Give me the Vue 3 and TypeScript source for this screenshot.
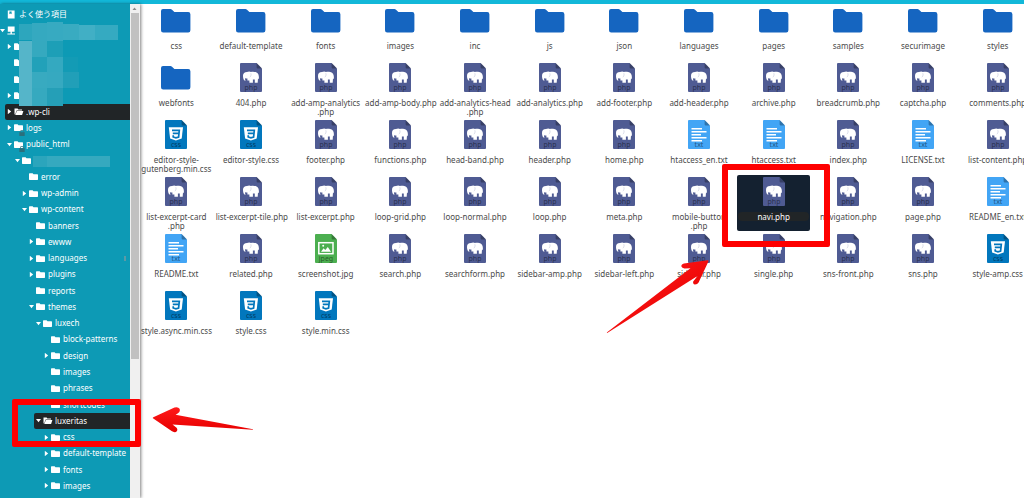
<script setup lang="ts">
interface TreeNode {
  name: string
  level: number
  state?: 'open' | 'closed'
  icon?: 'book' | 'server' | 'folder'
  active?: boolean
  locked?: boolean
  masked?: boolean
}

type FileKind = 'folder' | 'php' | 'css' | 'txt' | 'jpeg'

interface FileEntry {
  name: string
  kind: FileKind
  selected: boolean
}

const tree: TreeNode[] = [
  { name: 'よく使う項目', level: 0, icon: 'book' },
  { name: '', level: 0, icon: 'server', state: 'open', masked: true },
  { name: '', level: 1, state: 'closed', masked: true },
  { name: '', level: 1, masked: true },
  { name: '', level: 1, masked: true },
  { name: '', level: 1, state: 'closed', masked: true },
  { name: '.wp-cli', level: 1, state: 'closed', active: true },
  { name: 'logs', level: 1, state: 'closed', locked: true },
  { name: 'public_html', level: 1, state: 'open', locked: true },
  { name: '', level: 2, state: 'open', masked: true },
  { name: 'error', level: 3 },
  { name: 'wp-admin', level: 3, state: 'closed' },
  { name: 'wp-content', level: 3, state: 'open' },
  { name: 'banners', level: 4 },
  { name: 'ewww', level: 4, state: 'closed' },
  { name: 'languages', level: 4, state: 'closed' },
  { name: 'plugins', level: 4, state: 'closed' },
  { name: 'reports', level: 4 },
  { name: 'themes', level: 4, state: 'open' },
  { name: 'luxech', level: 5, state: 'open' },
  { name: 'block-patterns', level: 6 },
  { name: 'design', level: 6, state: 'closed' },
  { name: 'images', level: 6 },
  { name: 'phrases', level: 6 },
  { name: 'shortcodes', level: 6 },
  { name: 'luxeritas', level: 5, state: 'open', active: true },
  { name: 'css', level: 6, state: 'closed' },
  { name: 'default-template', level: 6, state: 'closed' },
  { name: 'fonts', level: 6, state: 'closed' },
  { name: 'images', level: 6, state: 'closed' },
]

const names = [
  'css', 'default-template', 'fonts', 'images', 'inc', 'js', 'json', 'languages', 'pages', 'samples', 'securimage', 'styles',
  'webfonts', '404.php', 'add-amp-analytics\n.php', 'add-amp-body.php', 'add-analytics-head\n.php', 'add-analytics.php',
  'add-footer.php', 'add-header.php', 'archive.php', 'breadcrumb.php', 'captcha.php', 'comments.php',
  'editor-style-\ngutenberg.min.css', 'editor-style.css', 'footer.php', 'functions.php', 'head-band.php', 'header.php',
  'home.php', 'htaccess_en.txt', 'htaccess.txt', 'index.php', 'LICENSE.txt', 'list-content.php',
  'list-excerpt-card\n.php', 'list-excerpt-tile.php', 'list-excerpt.php', 'loop-grid.php', 'loop-normal.php', 'loop.php',
  'meta.php', 'mobile-button\n.php', 'navi.php', 'navigation.php', 'page.php', 'README_en.txt',
  'README.txt', 'related.php', 'screenshot.jpg', 'search.php', 'searchform.php', 'sidebar-amp.php',
  'sidebar-left.php', 'sidebar.php', 'single.php', 'sns-front.php', 'sns.php', 'style-amp.css',
  'style.async.min.css', 'style.css', 'style.min.css',
]

function kindOf(name: string): FileKind {
  if (name.endsWith('.php')) return 'php'
  if (name.endsWith('.css')) return 'css'
  if (name.endsWith('.txt')) return 'txt'
  if (name.endsWith('.jpg')) return 'jpeg'
  return 'folder'
}

const files: FileEntry[] = names.map((name) => ({
  name,
  kind: kindOf(name),
  selected: name === 'navi.php',
}))

const indents = [-2, 5, 13, 20, 27, 34, 42]

const mosaic: [number, number, number, number, string][] = [
  [19, 24, 13, 16, '#2da6bd'],
  [32, 23, 15, 18, '#35a9c0'],
  [47, 22, 16, 19, '#37aac1'],
  [63, 24, 16, 16, '#39abc1'],
  [79, 25, 16, 15, '#41afc5'],
  [95, 25, 23, 15, '#35aac1'],
  [19, 41, 13, 65, '#55b5c9'],
  [32, 41, 15, 16, '#35a9bf'],
  [47, 41, 16, 16, '#1d9fb7'],
  [32, 57, 15, 15, '#22a1b9'],
  [47, 57, 16, 15, '#34a9c0'],
  [63, 57, 15, 15, '#139bb5'],
  [32, 72, 15, 16, '#38aac0'],
  [47, 72, 16, 16, '#36a9c0'],
  [63, 72, 16, 16, '#219fb8'],
  [32, 88, 15, 18, '#36a9bf'],
  [47, 88, 16, 18, '#259fb7'],
]
</script>

<template>
  <div class="manager">
    <header class="topbar"></header>
    <div class="panes">
      <nav class="sidebar">
        <ul class="tree">
          <li v-for="(node, i) in tree" :key="i">
            <button
              type="button"
              class="node"
              :class="{ active: node.active }"
              :style="{ marginLeft: `${indents[node.level]}px` }"
              :aria-label="node.name || 'folder'"
            >
              <svg class="caret" viewBox="0 0 6 6">
                <path v-if="node.state === 'open'" d="M0 1.3H6L3 5Z" fill="#fff" />
                <path v-else-if="node.state === 'closed'" d="M1 -0.2L5 3L1 6.2Z" fill="#fff" />
              </svg>
              <svg class="node-icon" viewBox="0 0 10 9">
                <path
                  v-if="node.icon === 'book'"
                  d="M0.8 0.5H7.6V8.5H0.8ZM2.4 1.4V4.2L3.5 3.4L4.6 4.2V1.4Z"
                  fill="#fff"
                  fill-rule="evenodd"
                />
                <path
                  v-else-if="node.icon === 'server'"
                  d="M0.8 0.5H7.6V5.8H4.9V7.4H8V8.6H0.4V7.4H3.5V5.8H0.8Z"
                  fill="#fff"
                />
                <path
                  v-else-if="node.active"
                  d="M0.5 7.6V1.5H3.6L4.4 2.4H8V3.5H2.6L1.3 7ZM2.9 4.1H9.4L8.1 7.9H1.2Z"
                  fill="#fff"
                />
                <path
                  v-else
                  d="M0.6 1.3H3.6L4.5 2.3H8.4Q9 2.3 9 2.9V7.3Q9 7.9 8.4 7.9H0.6Q0 7.9 0 7.3V1.9Q0 1.3 0.6 1.3Z"
                  fill="#fff"
                />
              </svg>
              <svg v-if="node.locked" class="lock" viewBox="0 0 6 6">
                <path d="M1.5 2.2V1.6A1.5 1.5 0 0 1 4.5 1.6V2.2" fill="none" stroke="#3b7f8c" />
                <rect x="0.3" y="2.2" width="5.4" height="3.8" fill="#2b6f7c" />
              </svg>
              <span class="node-name">{{ node.name }}</span>
            </button>
          </li>
        </ul>
        <div class="scrollbar">
          <svg class="scroll-up" viewBox="0 0 9 9"><path d="M2.5 6H6.5L4.5 3.6Z" fill="#8a8a8a" /></svg>
          <div class="thumb"></div>
        </div>
        <svg class="mosaic" width="130" height="170" viewBox="0 0 130 170">
          <rect
            v-for="(cell, i) in mosaic"
            :key="i"
            :x="cell[0]"
            :y="cell[1]"
            :width="cell[2]"
            :height="cell[3]"
            :fill="cell[4]"
          />
          <rect x="33" y="156" width="14" height="11" fill="#2ba5bc" />
          <rect x="47" y="156" width="63" height="11" fill="#35a9bf" />
        </svg>
        <div class="grip"></div>
      </nav>

      <main class="content">
        <ul class="grid">
          <li v-for="file in files" :key="file.name">
            <button type="button" class="file" :class="{ selected: file.selected }">
              <span class="file-icon">
                <svg v-if="file.kind === 'folder'" width="30" height="24" viewBox="0 0 30 24">
                  <path
                    d="M2 0H9.5Q10.3 0 11 0.8L13.4 3H27.2Q29.4 3 29.4 5.2V21.2Q29.4 23.5 27.2 23.5H2.2Q0 23.5 0 21.2V2Q0 0 2 0Z"
                    fill="#1565c0"
                  />
                </svg>
                <svg v-else class="doc" :class="file.kind" width="22" height="29" viewBox="0 0 22 29">
                  <path class="sheet" d="M1 0H16.6L22 5.4V28Q22 29 21 29H1Q0 29 0 28V1Q0 0 1 0Z" />
                  <path d="M16.6 0L22 5.4H17.4Q16.6 5.4 16.6 4.6Z" fill="#000" fill-opacity="0.3" />
                  <g v-if="file.kind === 'php'">
                    <path
                      d="M3 13.2C2.8 10.6 4.4 9 7 9C8.4 8.2 10 8.3 11 8.9C12.6 8.4 15.4 8.6 17 9.7C18.6 10.8 19.2 13 18.8 16.2L18 15.6L17.7 19.7H14.8V16.6H12.9V19.7H9.4V17.4H7.4V15.4C6.4 15.8 5.6 15.6 5.1 15C5 16.4 5.1 17 5.6 17.8C3.8 17.6 3.1 16 3 13.2Z"
                      fill="#fff"
                    />
                    <path
                      d="M10.8 10.2C11.4 11.6 11 13 9.9 14.2"
                      fill="none"
                      stroke="#4f5b93"
                      stroke-opacity="0.5"
                      stroke-width="0.4"
                    />
                  </g>
                  <g v-else-if="file.kind === 'css'">
                    <path d="M3.8 7.2H18L16.7 18.6L10.9 20.6L5.1 18.6Z" fill="#fff" />
                    <path
                      d="M7 10.3H14.3L13.6 17L10.9 17.9L8.2 17V15.3M7.8 13.4H14"
                      fill="none"
                      stroke="#0277bd"
                      stroke-width="1.7"
                    />
                  </g>
                  <path
                    v-else-if="file.kind === 'txt'"
                    d="M3.5 8.7H14M3.5 11.7H18.5M3.5 14.7H13M3.5 17.7H18.5M3.5 20.7H14"
                    stroke="#fff"
                    stroke-width="1.5"
                  />
                  <g v-else>
                    <rect x="3.8" y="8.7" width="14.2" height="11" fill="none" stroke="#fff" stroke-width="1.5" />
                    <path d="M6 17.7L8.6 14.2L10.3 16L12.8 13L16 17.7Z" fill="#fff" />
                    <circle cx="8.2" cy="11.8" r="1" fill="#fff" />
                  </g>
                  <text x="11" y="27" text-anchor="middle">{{ file.kind }}</text>
                </svg>
              </span>
              <span class="file-name">{{ file.name }}</span>
            </button>
          </li>
        </ul>
      </main>
    </div>

    <div class="frame frame-tree"></div>
    <div class="frame frame-file"></div>
    <svg class="arrow arrow-tree" width="102" height="28" viewBox="0 0 102 28">
      <defs>
        <linearGradient id="redTree" x1="0" y1="0" x2="0" y2="1">
          <stop offset="0" stop-color="#ff1a1a" />
          <stop offset="1" stop-color="#e60000" />
        </linearGradient>
      </defs>
      <path
        d="M1.3 12.3L22.5 2.6Q26 1.4 27.6 3.8Q28.6 6.6 26 8.2L23.6 9.8L101 24.2V24.8L20.5 19.6L24.6 22.8Q26.4 25.4 24 27Q21.6 27.6 19.6 26L1.3 13.6Q0 13 1.3 12.3Z"
        fill="url(#redTree)"
      />
    </svg>
    <svg class="arrow arrow-file" width="104" height="76" viewBox="0 0 104 76">
      <defs>
        <linearGradient id="redFile" x1="0" y1="0" x2="1" y2="1">
          <stop offset="0.2" stop-color="#ff1a1a" />
          <stop offset="0.8" stop-color="#e60000" />
        </linearGradient>
      </defs>
      <path
        d="M101.6 1.2L78 4.4Q75 5.2 75.4 7.6Q76 9.6 79 9.4L84.5 9.2L0.8 73.4L1.2 74L91.5 17L87.2 22.6Q86.6 25.2 89 25.6Q91.4 25.6 92.6 23.6L102.4 2.4Q102.8 1 101.6 1.2Z"
        fill="url(#redFile)"
      />
    </svg>
  </div>
</template>

<style>
body {
  margin: 0;
}
</style>

<style scoped>
.manager {
  position: relative;
  display: flex;
  flex-direction: column;
  min-height: 100vh;
  overflow: hidden;
  background: #fff;
  font-family: "Noto Sans", "Noto Sans CJK JP", sans-serif;
  font-size: 8px;
}

.topbar {
  height: 4px;
  background: #12b8d9;
}

.panes {
  display: flex;
  flex: 1;
}

.sidebar {
  display: flex;
  flex: none;
  width: 140px;
  background: #0d9ab5;
  box-shadow: 1px 0 3px rgba(0, 0, 0, 0.5);
}

ul {
  margin: 0;
  padding: 0;
  list-style: none;
}

button {
  border: 0;
  padding: 0;
  background: none;
  font: inherit;
  color: inherit;
}

.tree {
  display: flex;
  flex: 1;
  flex-direction: column;
  min-width: 0;
  padding: 2px 0 4px;
  color: #fff;
}

.tree li {
  display: flex;
  flex: 1;
  min-height: 16px;
}

.node {
  position: relative;
  display: flex;
  flex: 1;
  align-items: center;
  min-width: 0;
  text-align: left;
  white-space: nowrap;
}

.node.active {
  border-radius: 2px 0 0 2px;
  background: #212527;
}

.caret {
  flex: none;
  width: 5px;
  height: 5px;
  margin: 0 2px;
}

.node-icon {
  flex: none;
  width: 10px;
  height: 9px;
  margin-right: 2px;
}

.lock {
  position: absolute;
  top: 10px;
  left: 14px;
  width: 6px;
  height: 6px;
}

.node-name {
  line-height: 12px;
}

.scrollbar {
  flex: none;
  width: 10px;
  background: #f0f0f0;
}

.scroll-up {
  display: block;
  width: 9px;
  height: 9px;
}

.thumb {
  width: 8px;
  height: 70%;
  margin: 0 1px;
  background: #c1c1c1;
}

.mosaic {
  position: absolute;
  top: 0;
  left: 0;
}

.grip {
  position: absolute;
  top: 256px;
  left: 124px;
  width: 2px;
  height: 5px;
  background: #5c9aa6;
}

.content {
  flex: 1;
  min-width: 0;
}

.grid {
  display: grid;
  grid-template-columns: repeat(auto-fill, minmax(74px, 1fr));
  row-gap: 1px;
  margin: 0 -11px 0 -1px;
}

.grid li {
  display: flex;
  height: 56px;
  padding: 0 1px;
}

.file {
  display: flex;
  flex: 1;
  flex-direction: column;
  align-items: center;
  min-width: 0;
  border-radius: 2px;
  color: #4a4a4a;
}

.file.selected {
  background: #142130;
  color: #fff;
}

.file-icon {
  display: flex;
  flex: none;
  align-items: center;
  height: 33px;
  margin-bottom: 4px;
}

.file-name {
  align-self: stretch;
  margin: 0 1px;
  border-radius: 4px;
  line-height: 9px;
  text-align: center;
  white-space: pre;
}

.selected .file-name {
  background: #212527;
}

.doc text {
  fill: #000;
  fill-opacity: 0.5;
  font-size: 7px;
}

.php .sheet {
  fill: #4f5b93;
}

.css .sheet {
  fill: #0277bd;
}

.txt .sheet {
  fill: #42a5f5;
}

.jpeg .sheet {
  fill: #4caf50;
}

.frame {
  position: absolute;
  box-sizing: border-box;
  border: 6px solid #fe0000;
  border-radius: 2px;
  pointer-events: none;
}

.frame-tree {
  top: 399px;
  left: 12px;
  width: 129px;
  height: 48px;
}

.frame-file {
  top: 164px;
  left: 722px;
  width: 108px;
  height: 83px;
}

.arrow {
  position: absolute;
  pointer-events: none;
}

.arrow-tree {
  top: 405px;
  left: 152px;
}

.arrow-file {
  top: 259px;
  left: 606px;
}
</style>
